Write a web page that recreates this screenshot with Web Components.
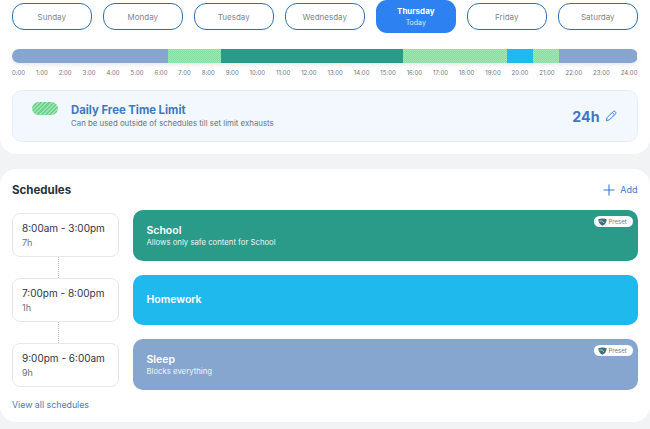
<!DOCTYPE html>
<html>
<head>
<meta charset="utf-8">
<style>
  html, body { margin: 0; padding: 0; }
  body {
    width: 650px;
    height: 429px;
    overflow: hidden;
    background: #f2f3f4;
    font-family: Inter, "Noto Sans", sans-serif;
  }
</style>
</head>
<body>
<day-schedule>
  <day-tabs></day-tabs>
  <time-bar></time-bar>
  <free-limit></free-limit>
</day-schedule>
<schedule-panel>
  <schedule-row time="8:00am - 3:00pm" hours="7h" name="School" note="Allows only safe content for School" color="#299b88" preset line></schedule-row>
  <schedule-row time="7:00pm - 8:00pm" hours="1h" name="Homework" color="#1fb9ee" line></schedule-row>
  <schedule-row time="9:00pm - 6:00am" hours="9h" name="Sleep" note="Blocks everything" color="#86a6cf" preset></schedule-row>
</schedule-panel>

<script>
class DaySchedule extends HTMLElement {
  constructor() {
    super();
    this.attachShadow({ mode: "open" }).innerHTML = `
      <style>
        :host {
          display: block;
          box-sizing: border-box;
          height: 154px;
          padding: 0 12.5px 0 12px;
          background: #fff;
          border-radius: 0 0 16px 16px;
        }
      </style>
      <slot></slot>`;
  }
}

class DayTabs extends HTMLElement {
  constructor() {
    super();
    const days = ["Sunday", "Monday", "Tuesday", "Wednesday", "Thursday", "Friday", "Saturday"];
    this.attachShadow({ mode: "open" }).innerHTML = `
      <style>
        :host {
          display: flex;
          justify-content: space-between;
          align-items: center;
          height: 33px;
        }
        div {
          box-sizing: border-box;
          width: 79.5px;
          height: 27px;
          display: flex;
          flex-direction: column;
          align-items: center;
          justify-content: center;
          border: 1.3px solid #2f6fb0;
          border-radius: 12px;
          font-size: 8px;
          color: #7d8590;
        }
        .on {
          height: 33px;
          margin-top: -1px;
          background: #2d81f0;
          border: 0;
          border-radius: 11px;
          color: #fff;
          font-weight: 700;
        }
        .on small {
          font-size: 7px;
          font-weight: 400;
          color: #dcebfd;
          margin-top: 2px;
        }
      </style>
      ${days.map(d => d === "Thursday"
        ? `<div class="on">${d}<small>Today</small></div>`
        : `<div>${d}</div>`).join("")}`;
  }
}

class TimeBar extends HTMLElement {
  constructor() {
    super();
    const segs = [
      ["blue", 156], ["hatch", 52.5], ["teal", 182.5], ["hatch", 104],
      ["cyan", 26], ["hatch", 26], ["blue", 78]
    ];
    let labels = "";
    for (let h = 0; h <= 24; h++) labels += `<span>${h}:00</span>`;
    this.attachShadow({ mode: "open" }).innerHTML = `
      <style>
        :host { display: block; padding-top: 16px; }
        .bar {
          display: flex;
          height: 14px;
          border-radius: 7px;
          overflow: hidden;
          box-shadow: 0 2px 4px rgba(120, 130, 150, .18);
        }
        .bar i { display: block; flex: none; }
        .blue { background: #86a6cf; }
        .teal { background: #299b88; }
        .cyan { background: #1fb9ee; }
        .hatch {
          background: conic-gradient(#84dd9f 25%, #9fe9b5 0 50%, #84dd9f 0 75%, #9fe9b5 0) 0 0 / 2px 2px;
        }
        .labels {
          display: flex;
          justify-content: space-between;
          margin-top: 6px;
          font-size: 6px;
          line-height: 8px;
          color: #6f7680;
        }
      </style>
      <div class="bar">${segs.map(s => `<i class="${s[0]}" style="width:${s[1]}px"></i>`).join("")}</div>
      <div class="labels">${labels}</div>`;
  }
}

class FreeLimit extends HTMLElement {
  constructor() {
    super();
    this.attachShadow({ mode: "open" }).innerHTML = `
      <style>
        :host {
          display: flex;
          align-items: center;
          box-sizing: border-box;
          height: 52px;
          margin-top: 13px;
          padding: 0 20px 0 19px;
          background: #f2f8fe;
          border: 1px solid #e3eef9;
          border-radius: 10px;
        }
        .pill {
          flex: none;
          align-self: flex-start;
          width: 26px;
          height: 13px;
          margin-top: 11px;
          border-radius: 7px;
          background: repeating-linear-gradient(135deg, #6fd08e 0 1.5px, #9ae6b0 1.5px 3px);
        }
        .text { flex: 1; margin-left: 13px; }
        h3 {
          margin: 0;
          font-size: 11.3px;
          line-height: 14px;
          font-weight: 700;
          color: #3c78c8;
        }
        p {
          margin: 1px 0 0;
          font-size: 7.85px;
          line-height: 11px;
          color: #6b7280;
        }
        b {
          font-size: 14.2px;
          font-weight: 700;
          color: #3c78c8;
          margin-right: 5px;
        }
        svg { display: block; }
      </style>
      <div class="pill"></div>
      <div class="text">
        <h3>Daily Free Time Limit</h3>
        <p>Can be used outside of schedules till set limit exhausts</p>
      </div>
      <b>24h</b>
      <svg width="12" height="12" viewBox="0 0 12 12" fill="none" stroke="#3c78c8" stroke-width="1" stroke-linejoin="round">
        <path d="M1.4 10.6l.7-3L8.3 1.4a1.1 1.1 0 0 1 1.6 0l.7.7a1.1 1.1 0 0 1 0 1.6L4.4 9.9z"/>
        <path d="M7.2 2.5l2.3 2.3"/>
      </svg>`;
  }
}

class SchedulePanel extends HTMLElement {
  constructor() {
    super();
    this.attachShadow({ mode: "open" }).innerHTML = `
      <style>
        :host {
          display: block;
          box-sizing: border-box;
          height: 253px;
          margin-top: 15px;
          padding: 0 12.5px 0 12px;
          background: #fff;
          border-radius: 16px;
        }
        header {
          display: flex;
          align-items: center;
          justify-content: space-between;
          height: 41px;
        }
        h2 {
          margin: 0;
          font-size: 11.5px;
          font-weight: 700;
          color: #2a2f3a;
        }
        .add {
          display: flex;
          align-items: center;
          gap: 5px;
          font-size: 9px;
          color: #3c78c8;
        }
        svg { display: block; }
        .rows {
          display: flex;
          flex-direction: column;
          gap: 13.9px;
        }
        a {
          display: block;
          margin-top: 9px;
          font-size: 8.8px;
          line-height: 12px;
          color: #4b7db8;
        }
      </style>
      <header>
        <h2>Schedules</h2>
        <div class="add">
          <svg width="12" height="12" viewBox="0 0 12 12" stroke="#3c78c8" stroke-width="1.1">
            <path d="M6 .5v11M.5 6h11"/>
          </svg>
          Add
        </div>
      </header>
      <div class="rows"><slot></slot></div>
      <a>View all schedules</a>`;
  }
}

class ScheduleRow extends HTMLElement {
  constructor() {
    super();
    const a = n => this.getAttribute(n) || "";
    const note = a("note") ? `<p>${a("note")}</p>` : "";
    const preset = this.hasAttribute("preset") ? `<preset-tag></preset-tag>` : "";
    this.attachShadow({ mode: "open" }).innerHTML = `
      <style>
        :host {
          display: grid;
          grid-template-columns: 107px 1fr;
          column-gap: 14px;
          align-items: center;
          height: 50.7px;
        }
        .time {
          position: relative;
          box-sizing: border-box;
          height: 44px;
          padding: 0 9px;
          display: flex;
          flex-direction: column;
          justify-content: center;
          background: #fff;
          border: 1px solid #e6e8ec;
          border-radius: 8px;
          font-size: 10px;
          line-height: 14px;
          white-space: nowrap;
          color: #2f343d;
        }
        .time small { font-size: 9px; line-height: 12px; color: #6b7280; margin-top: 2px; }
        .line {
          position: absolute;
          left: 45px;
          top: 43px;
          height: 21px;
          border-left: 1px dotted #b9bdc4;
        }
        .block {
          position: relative;
          box-sizing: border-box;
          height: 100%;
          padding: ${note ? "1.5px" : "0"} 13.5px 0;
          display: flex;
          flex-direction: column;
          justify-content: center;
          border-radius: 10px;
          background: ${a("color")};
          color: #fff;
        }
        h4 { margin: 0; font-size: 10.5px; line-height: 13px; font-weight: 600; }
        p { margin: 0; font-size: 7.75px; line-height: 11px; color: #eef6f6; }
      </style>
      <div class="time">${a("time")}<small>${a("hours")}</small>${this.hasAttribute("line") ? `<span class="line"></span>` : ""}</div>
      <div class="block"><h4>${a("name")}</h4>${note}${preset}</div>`;
  }
}

class PresetTag extends HTMLElement {
  constructor() {
    super();
    this.attachShadow({ mode: "open" }).innerHTML = `
      <style>
        :host {
          position: absolute;
          top: 6px;
          right: 5px;
          display: flex;
          align-items: center;
          gap: 1.5px;
          box-sizing: border-box;
          width: 39px;
          height: 11px;
          padding-left: 4.5px;
          background: #fff;
          border-radius: 6px;
          font-size: 6px;
          color: #6f7a86;
        }
        svg { display: block; flex: none; }
      </style>
      <svg width="9" height="8" viewBox="0 0 9 8" fill="#3d6f78">
        <path d="M.3 1.2C3 .2 6 .2 8.7 1.2 8.7 4 7 6.6 4.5 7.8 2 6.6.3 4 .3 1.2z"/>
        <path d="M1.5 3.2C3.5 2.6 5 3 6 5" fill="none" stroke="#fff" stroke-width=".6"/>
      </svg>
      <span>Preset</span>`;
  }
}

customElements.define("day-schedule", DaySchedule);
customElements.define("day-tabs", DayTabs);
customElements.define("time-bar", TimeBar);
customElements.define("free-limit", FreeLimit);
customElements.define("schedule-panel", SchedulePanel);
customElements.define("schedule-row", ScheduleRow);
customElements.define("preset-tag", PresetTag);
</script>
</body>
</html>
